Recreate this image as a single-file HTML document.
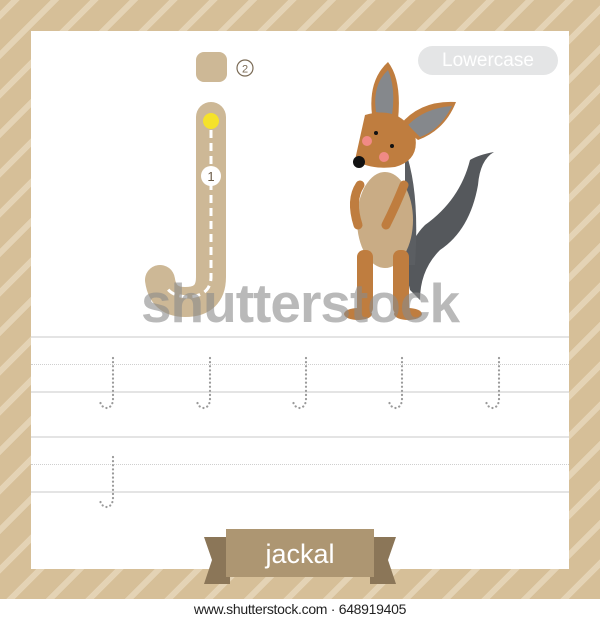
<!DOCTYPE html>
<html><head><style>
body{margin:0;width:600px;height:620px;position:relative;background:#fff;font-family:"Liberation Sans",sans-serif;overflow:hidden}
.bg{position:absolute;left:0;top:0;width:600px;height:599px;background:repeating-linear-gradient(-45deg,#d6bf98 0 22px,#e4d3b5 22px 28px)}
.panel{position:absolute;left:31px;top:31px;width:538px;height:538px;background:#fff}
.ln{position:absolute;left:31px;width:538px;height:2px;background:#e4e4e4}
.dt{position:absolute;left:31px;width:538px;border-top:1px dotted #cfcfcf}
.foot{position:absolute;top:601px;width:600px;text-align:center;font-size:14px;color:#222;letter-spacing:-0.3px}
</style></head><body>
<div class="bg"></div>
<div class="panel"></div>
<div style="position:absolute;left:418px;top:46px;width:140px;height:29px;border-radius:15px;background:#e4e5e6;color:#fff;font-size:19px;text-align:center;line-height:29px">Lowercase</div>
<svg style="position:absolute;left:0;top:0" width="600" height="620">
<rect x="196" y="52" width="31" height="30" rx="8" fill="#cdb896"/>
<circle cx="245" cy="68" r="8" fill="none" stroke="#7a6a55" stroke-width="1.2"/>
<text x="245" y="72.5" font-size="11" text-anchor="middle" fill="#7a6a55">2</text>
<path d="M211 117 V277 Q211 302 185 302 Q163 302 160 280" fill="none" stroke="#cdb896" stroke-width="30" stroke-linecap="round"/>
<circle cx="211" cy="121" r="8" fill="#f5e22a"/>
<path d="M211 130 V278 Q210 296 188 297 Q172 296 167 288" fill="none" stroke="#fff" stroke-width="3" stroke-dasharray="8 5"/>
<circle cx="211" cy="176" r="10" fill="#fff"/>
<text x="211" y="181" font-size="13" text-anchor="middle" fill="#6a5a45">1</text>
<path d="M410 290 Q400 250 425 225 Q460 200 470 160 Q478 155 494 152 Q480 160 478 185 Q470 230 440 250 Q420 270 420 300Z" fill="#55585c"/>
<path d="M405 150 Q420 190 415 265 L405 265Z" fill="#5b5e62"/>
<ellipse cx="385" cy="220" rx="28" ry="48" fill="#c9ac85"/>
<rect x="357" y="250" width="16" height="65" rx="7" fill="#bf7d3f"/>
<rect x="393" y="250" width="16" height="65" rx="7" fill="#bf7d3f"/>
<ellipse cx="358" cy="314" rx="14" ry="6" fill="#bf7d3f"/>
<ellipse cx="408" cy="314" rx="14" ry="6" fill="#bf7d3f"/>
<path d="M360 185 Q350 200 358 225" stroke="#bf7d3f" stroke-width="9" fill="none" stroke-linecap="round"/>
<path d="M404 185 Q396 205 386 225" stroke="#bf7d3f" stroke-width="9" fill="none" stroke-linecap="round"/>
<path d="M372 115 Q368 80 388 62 Q402 80 398 120Z" fill="#bf7d3f"/>
<path d="M376 112 Q372 85 388 70 Q396 88 392 115Z" fill="#85888c"/>
<path d="M400 125 Q420 100 456 102 Q445 130 418 140Z" fill="#bf7d3f"/>
<path d="M408 125 Q425 108 452 106 Q440 130 420 137Z" fill="#85888c"/>
<path d="M365 115 Q400 105 415 135 Q420 160 395 167 Q370 170 355 160Z" fill="#bf7d3f"/>
<circle cx="359" cy="162" r="6" fill="#111"/>
<circle cx="367" cy="141" r="5" fill="#f08a85"/>
<circle cx="384" cy="157" r="5" fill="#f08a85"/>
<circle cx="376" cy="133" r="2" fill="#111"/>
<circle cx="392" cy="146" r="2" fill="#111"/>
<text x="300" y="322" font-size="55" font-weight="bold" text-anchor="middle" fill="#8a8a8a" fill-opacity="0.6" letter-spacing="-1">shutterstock</text>
<path d="M204 537 L230 537 L230 584 L204 584 L212 560Z" fill="#8b7658"/>
<path d="M396 537 L370 537 L370 584 L396 584 L388 560Z" fill="#8b7658"/>
<rect x="226" y="529" width="148" height="48" fill="#ad9672"/>
<text x="300" y="563" font-size="27" text-anchor="middle" fill="#fff">jackal</text>
</svg>
<div class="ln" style="top:336px"></div>
<div class="dt" style="top:364px"></div>
<div class="ln" style="top:391px"></div>
<div class="ln" style="top:436px"></div>
<div class="dt" style="top:464px"></div>
<div class="ln" style="top:491px"></div>
<svg style="position:absolute;left:0;top:0" width="600" height="620">
<g fill="none" stroke="#9a9a9a" stroke-width="2.2" stroke-dasharray="0.1 4" stroke-linecap="round">
<path d="M113 358 V400 Q112 408 106 408 Q101 407 100 401"/>
<path d="M210 358 V400 Q209 408 203 408 Q198 407 197 401"/>
<path d="M306 358 V400 Q305 408 299 408 Q294 407 293 401"/>
<path d="M402 358 V400 Q401 408 395 408 Q390 407 389 401"/>
<path d="M499 358 V400 Q498 408 492 408 Q487 407 486 401"/>
<path d="M113 457 V499 Q112 507 106 507 Q101 506 100 500"/>
</g></svg>
<div class="foot">www.shutterstock.com · 648919405</div>
</body></html>
